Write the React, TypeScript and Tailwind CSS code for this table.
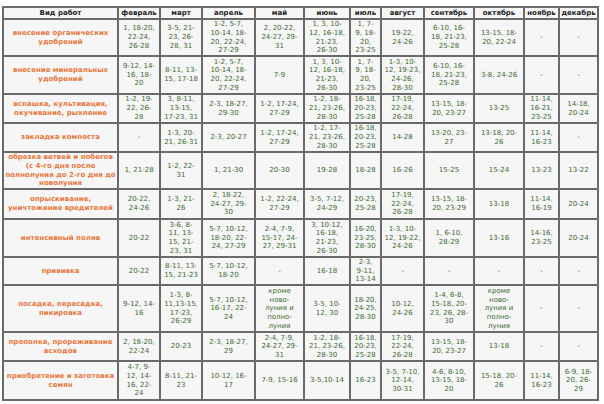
import React from 'react';

const months = ['февраль', 'март', 'апрель', 'май', 'июнь', 'июль', 'август', 'сентябрь', 'октябрь', 'ноябрь', 'декабрь'];

// ширины колонок, px
const widths = [115, 42, 42, 53, 49, 46, 31, 43, 50, 50, 35, 39];

type Row = { work: string; h: number; days: string[] };

const moon = 'кроме\nново-\nлуния и\nполно-\nлуния';

const rows: Row[] = [
  {
    work: 'внесение органических\nудобрений',
    h: 37,
    days: ['1, 18-20,\n22-24,\n26-28', '3-5, 21-\n23, 26-\n28, 31', '1-2, 5-7,\n10-14, 18-\n20, 22-24,\n27-29', '2, 20-22,\n24-27, 29-\n31', '1, 3, 10-\n12, 16-18,\n21-23,\n26-30', '1, 7-\n9, 18-\n20,\n23-25', '19-22,\n24-26', '6-10, 16-\n18, 21-23,\n25-28', '13-15, 18-\n20, 22-24', '-', '-'],
  },
  {
    work: 'внесение минеральных\nудобрений',
    h: 38,
    days: ['9-12, 14-\n16, 18-\n20', '8-11, 13-\n15, 17-18', '1-2, 5-7,\n10-14, 18-\n20, 22-24,\n27-29', '7-9', '1, 3, 10-\n12, 16-18,\n21-23,\n26-30', '1, 7-\n9, 18-\n20,\n23-25', '1-3, 10-\n12, 19-23,\n24-26,\n28-30', '6-10, 16-\n18, 21-23,\n25-28', '3-8, 24-26', '-', '-'],
  },
  {
    work: 'вспашка, культивация,\nокучивание, рыхление',
    h: 29,
    days: ['1-2, 19-\n22, 26-\n28', '3, 8-11,\n13-15,\n17-23, 31', '2-3, 18-27,\n29-30', '1-2, 17-24,\n27-29', '1-2, 18-\n21, 23-26,\n28-30', '16-18,\n20-23,\n25-28', '17-19,\n22-24,\n26-28', '13-15, 18-\n20, 23-27', '13-25', '11-14,\n16-21,\n23-25', '14-18,\n20-24'],
  },
  {
    work: 'закладка компоста',
    h: 29,
    days: ['-', '1-3, 20-\n21, 26-31', '2-3, 20-27', '1-2, 17-24,\n27-29', '1-2, 17-\n21, 23-26,\n28-30', '16-18,\n20-23,\n25-28', '14-28', '13-20, 23-\n27', '13-18, 20-\n26', '11-14,\n16-23', '-'],
  },
  {
    work: 'обрезка ветвей и побегов\n(с 4-го дня после\nполнолуния до 2-го дня до\nноволуния',
    h: 37,
    days: ['1, 21-28', '1-2, 22-\n31', '1, 21-30', '20-30', '19-28', '18-28', '16-26', '15-25', '15-24', '13-23', '13-22'],
  },
  {
    work: 'опрыскивание,\nуничтожение вредителей',
    h: 30,
    days: ['20-22,\n24-26', '1-3, 21-\n26', '2, 18-22,\n24-27, 29-\n30', '1-2, 22-24,\n27-29', '3-5, 7-12,\n24-29', '20-23,\n25-28', '17-19,\n22-24,\n26-28', '13-15, 18-\n20, 23-29', '13-18', '11-14,\n16-19', '20-24'],
  },
  {
    work: 'интенсивный полив',
    h: 38,
    days: ['20-22', '3-6, 8-\n11, 13-\n15, 21-\n23, 31', '5-7, 10-12,\n18-20, 22-\n24, 27-29', '2-4, 7-9,\n15-17, 24-\n27, 29-31', '3, 10-12,\n16-18,\n21-23,\n26-30', '16-20,\n23-25,\n28-30', '1-3, 10-\n12, 19-22,\n24-26', '1, 6-10,\n28-29', '13-16', '14-16,\n23-25', '20-24'],
  },
  {
    work: 'прививка',
    h: 28,
    days: ['20-22', '8-11, 13-\n15, 21-23', '5-7, 10-12,\n18-20', '-', '16-18', '2-3,\n9-11,\n13-14', '-', '-', '-', '-', '-'],
  },
  {
    work: 'посадка, пересадка,\nпикировка',
    h: 47,
    days: ['9-12, 14-\n16', '1-3, 8-\n11,13-15,\n17-23,\n26-29', '5-7, 10-12,\n16-17, 22-\n24', moon, '3-5, 10-\n12, 30', '18-20,\n24-25,\n28-30', '10-12,\n24-26', '1-4, 6-8,\n15-18, 20-\n23, 26, 28-\n30', moon, '-', '-'],
  },
  {
    work: 'прополка, прореживание\nвсходов',
    h: 29,
    days: ['2, 18-20,\n22-24', '20-23', '2-3, 18-27,\n29', '2-4, 7-9,\n24-27, 29-\n31', '1-2, 18-\n21, 23-26,\n28-30', '16-18,\n20-23,\n25-28', '17-19,\n22-24,\n26-28', '13-15, 18-\n20, 23-27', '13-18', '-', '-'],
  },
  {
    work: 'приобретение и заготовка\nсемян',
    h: 39,
    days: ['4-7, 9-\n12, 14-\n16, 22-\n24', '8-11, 21-\n23', '10-12, 16-\n17', '7-9, 15-16', '3-5,10-14', '16-23', '3-5, 7-10,\n12-14,\n30-31', '4-6, 8-10,\n13-15, 18-\n20', '15-18, 20-\n26', '11-14,\n16-23', '6-9, 18-\n20, 26-\n29'],
  },
];

const cell = 'border-2 border-[#6a6a6a] bg-[#f6f6f6] p-0 text-center align-middle whitespace-pre';

export default function App() {
  return (
    <div className="w-[604px] h-[404px] bg-white pt-[6px] pl-[2px] font-['DejaVu_Sans',Verdana,sans-serif]">
      <table className="table-fixed border-collapse w-[595px]">
        <colgroup>
          {widths.map((w, i) => (
            <col key={i} style={{ width: w }} />
          ))}
        </colgroup>
        <thead>
          <tr className="h-[12px]">
            <th className={`${cell} text-[7px] leading-[8.7px] font-bold text-[#222]`}>Вид работ</th>
            {months.map(m => (
              <th key={m} className={`${cell} text-[7px] leading-[8.7px] font-bold text-[#222]`}>{m}</th>
            ))}
          </tr>
        </thead>
        <tbody>
          {rows.map(r => (
            <tr key={r.work} style={{ height: r.h }}>
              <td className={`${cell} text-[7px] leading-[8.7px] font-bold text-[#e8773c]`}>{r.work}</td>
              {r.days.map((d, i) => (
                <td key={i} className={`${cell} text-[7px] leading-[8.7px] text-[#3a6a30]`}>{d}</td>
              ))}
            </tr>
          ))}
        </tbody>
      </table>
    </div>
  );
}
